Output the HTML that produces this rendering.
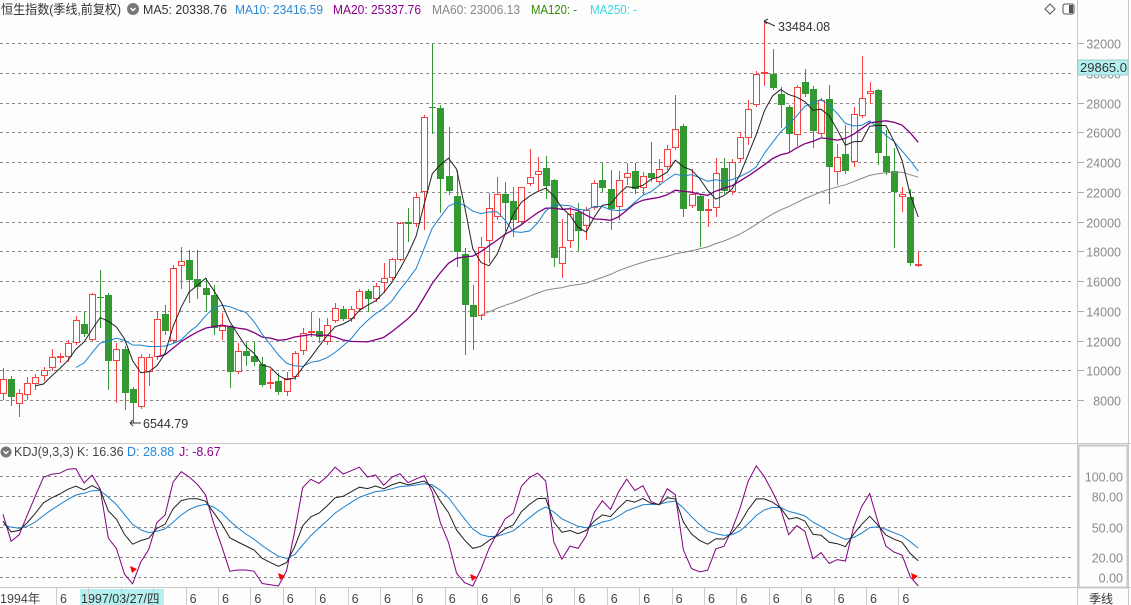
<!DOCTYPE html>
<html><head><meta charset="utf-8"><style>
body{margin:0;background:#fdfdfd;width:1131px;height:605px;overflow:hidden;font-family:"Liberation Sans","Noto Sans CJK SC",sans-serif}
svg{position:absolute;left:0;top:0}
</style></head><body>
<svg id="s" width="1131" height="605" xmlns="http://www.w3.org/2000/svg" font-family="Liberation Sans, Noto Sans CJK SC, sans-serif">
<rect width="1131" height="605" fill="#fdfdfd"/>
<g id="grid"></g>
<g id="candles"></g>
<g id="lines" fill="none"></g>
<text x="1" y="14" font-size="13" fill="#333" textLength="120" lengthAdjust="spacingAndGlyphs">恒生指数(季线,前复权)</text>
<circle cx="133" cy="9" r="6" fill="#777"/><path d="M130.5 8l2.5 2.5 2.5-2.5" stroke="#fff" stroke-width="1.4" fill="none"/>
<path d="M1050 4l5 5-5 5-5-5z" stroke="#555" fill="none"/>
<rect x="1063" y="4" width="11" height="10" rx="2" stroke="#555" fill="none"/><rect x="1069" y="5" width="4" height="8" fill="#555"/>
<line x1="1077.5" y1="0" x2="1077.5" y2="605" stroke="#c8c8c8"/>
<line x1="1128.5" y1="0" x2="1128.5" y2="605" stroke="#c8c8c8"/>
<line x1="0" y1="443.5" x2="1131" y2="443.5" stroke="#c8c8c8"/>
<line x1="0" y1="587.5" x2="1131" y2="587.5" stroke="#c8c8c8"/>
<rect x="1078.5" y="445.5" width="49" height="142" fill="none" stroke="#c8c8c8" stroke-width="2"/>
<rect x="1078" y="60" width="50" height="15" fill="#b3f0ef" stroke="#9cc"/>
<text x="1080" y="72" font-size="13" fill="#333">29865.0</text>
<circle cx="6" cy="452" r="5.5" fill="#777"/><path d="M3.5 451l2.5 2.5 2.5-2.5" stroke="#fff" stroke-width="1.4" fill="none"/>
<text y="456" font-size="12.5"><tspan x="14" fill="#444">KDJ(9,3,3)</tspan><tspan x="77" fill="#444">K: 16.36</tspan><tspan x="127" fill="#2288dd">D: 28.88</tspan><tspan x="179" fill="#8b008b">J: -8.67</tspan></text>
<text x="778" y="31" font-size="12.5" fill="#333">33484.08</text>
<path d="M764 21l11 5M764 21l4 -2M764 21l3 3" stroke="#333" fill="none"/>
<text x="143" y="428" font-size="12.5" fill="#333">6544.79</text>
<path d="M130 423h11M130 423l3 -3M130 423l3 3" stroke="#333" fill="none"/>
<rect x="80" y="589" width="84" height="16" fill="#b3f0ef"/>
<g id="axis"></g>
<text x="1089" y="603" font-size="12" fill="#333">季线</text>
</svg>
<script>
var NS="http://www.w3.org/2000/svg";
function el(p,t,a,txt){var e=document.createElementNS(NS,t);for(var k in a)e.setAttribute(k,a[k]);if(txt!=null)e.textContent=txt;document.getElementById(p).appendChild(e);return e;}
var hdr=[["MA5: 20338.76","#333",143,84],["MA10: 23416.59","#2a88d8",235,88],["MA20: 25337.76","#8b008b",333,88],["MA60: 23006.13","#888",432,88],["MA120: -","#2e8b00",531,46],["MA250: -","#3dd6e0",590,47]];
hdr.forEach(function(h){el('grid','text',{x:h[2],y:14,'font-size':13,fill:h[1],textLength:h[3],lengthAdjust:'spacingAndGlyphs'},h[0]);});
for(var p=8000;p<=32000;p+=2000){var y=Math.round(43+(32000-p)*0.01488)+0.5;
 el('grid','line',{x1:0,y1:y,x2:1072,y2:y,stroke:'#888','stroke-dasharray':'3 3'});
 el('grid','line',{x1:1078,y1:y,x2:1084,y2:y,stroke:'#aaa'});
 el('grid','text',{x:1121,y:y+5,'font-size':12.5,fill:'#8a8a8a','text-anchor':'end'},p);}
[100,80,50,20,0].forEach(function(v){var y=Math.round(577-v*1.01)+0.5;
 el('grid','line',{x1:0,y1:y,x2:1072,y2:y,stroke:'#888','stroke-dasharray':'3 3'});
 el('grid','text',{x:1123,y:y+5,'font-size':12.5,fill:'#8a8a8a','text-anchor':'end'},v.toFixed(2));});
var D=[[379,394,368,400,1],[379,397,376,406,0],[393,404,389,417,1],[383,395,377,400,1],[377,384,374,390,1],[370,376,367,381,1],[357,368,349,371,1],[356,358,353,363,1],[343,357,340,362,1],[320,343,316,345,1],
[324,334,312,337,0],[294,340,293,341,1],[297,297,270,328,0],[295,361,293,390,0],[349,361,343,403,1],[349,393,346,410,0],[389,403,387,423,0],[357,407,354,409,1],[357,372,354,386,1],[319,357,311,360,1],
[314,331,305,335,0],[268,341,265,344,1],[261,266,247,289,1],[260,280,250,303,0],[279,287,250,299,0],[288,295,278,312,0],[295,328,285,335,0],[326,331,313,340,1],[326,372,325,388,0],[351,372,343,374,1],
[351,356,342,366,0],[356,362,342,366,0],[364,385,357,387,0],[382,383,369,389,1],[381,392,373,395,0],[378,392,372,396,1],[353,377,351,380,1],[333,351,328,355,1],[331,332,312,337,1],[331,337,318,343,0],
[325,342,318,345,1],[308,321,303,323,1],[309,319,306,321,0],[309,319,306,322,1],[291,309,289,312,1],[291,299,289,312,0],[286,299,283,302,1],[278,283,263,293,1],[259,278,258,280,1],[223,260,222,261,1],
[222,224,208,242,0],[197,224,193,227,1],[117,192,115,230,1],[107,107,44,134,0],[108,179,105,213,0],[176,191,127,195,0],[196,252,170,267,0],[254,305,248,355,0],[305,317,285,350,0],[247,316,237,320,1],
[208,241,193,263,1],[194,217,177,220,1],[194,203,182,231,0],[201,220,187,237,0],[187,222,187,225,1],[177,184,149,186,1],[171,175,157,191,1],[168,186,156,199,0],[180,258,179,267,0],[247,264,219,278,1],
[214,241,207,248,1],[212,231,203,251,0],[210,226,207,240,1],[183,208,180,210,1],[180,188,163,192,0],[189,209,170,230,0],[180,207,171,220,1],[173,178,163,185,1],[171,189,163,194,0],[176,188,172,195,1],
[173,178,142,182,0],[169,182,159,185,1],[149,167,145,170,1],[129,148,95,150,1],[126,209,124,217,0],[194,206,169,208,1],[196,211,194,247,0],[209,211,199,227,1],[173,208,158,217,1],[168,191,158,194,0],
[162,192,159,195,1],[137,159,132,162,1],[109,138,100,145,1],[74,105,71,107,1],[72,74,21,86,1],[74,88,49,90,0],[94,105,87,128,0],[107,134,105,152,0],[87,135,85,146,1],[82,94,69,97,0],
[89,131,86,148,0],[100,134,98,137,1],[99,167,85,204,0],[157,172,144,185,1],[154,171,125,174,0],[114,162,107,167,1],[98,116,56,118,1],[91,94,82,104,1],[90,153,89,165,0],[156,172,130,175,0],
[171,192,148,248,0],[194,197,187,212,1],[197,263,189,266,0],[264,266,252,267,1]];
var RED='#f44040',GRN='#339933';
function X(i){return 3+8.1*i;}
D.forEach(function(d,i){var x=Math.round(X(i));var c=d[4]?RED:GRN;
 el('candles','line',{x1:x+0.5,y1:d[2],x2:x+0.5,y2:d[3],stroke:c});
 var h=Math.max(1,d[1]-d[0]);
 if(d[4]) el('candles','rect',{x:x-2.5,y:d[0]+0.5,width:6,height:Math.max(1,h-1),fill:'#fdfdfd',stroke:c});
 else el('candles','rect',{x:x-3,y:d[0],width:7,height:h,fill:c});});
var C=D.map(function(d){return d[4]?d[0]:d[1];});
function ma(n,col,w){var pts=[];for(var i=n-1;i<C.length;i++){var s=0;for(var j=i-n+1;j<=i;j++)s+=C[j];pts.push(X(i).toFixed(1)+','+(s/n).toFixed(1));}
 el('lines','polyline',{points:pts.join(' '),stroke:col,'stroke-width':w||1});}
ma(60,'#888');ma(20,'#800080',1.3);ma(10,'#1a80d0');ma(5,'#222');
function P(y){return 32000-(y-43)/0.01488;}
var K=50,Dd=50,kp=[],dp=[],jp=[];
for(var i=0;i<D.length;i++){var hh=-1e9,ll=1e9;for(var j=Math.max(0,i-8);j<=i;j++){hh=Math.max(hh,P(D[j][2]));ll=Math.min(ll,P(D[j][3]));}
 var rsv=hh==ll?50:(P(C[i])-ll)/(hh-ll)*100;K=(2*K+rsv)/3;Dd=(2*Dd+K)/3;var J=3*K-2*Dd;
 var x=X(i).toFixed(1);function yy(v){return Math.min(586,577-v*1.01).toFixed(1);}
 kp.push(x+','+yy(K));dp.push(x+','+yy(Dd));jp.push(x+','+yy(J));}
el('lines','polyline',{points:jp.join(' '),stroke:'#800080'});
el('lines','polyline',{points:dp.join(' '),stroke:'#1a80d0'});
el('lines','polyline',{points:kp.join(' '),stroke:'#222'});
[[130,570],[278,577],[470,578],[911,577]].forEach(function(t){el('lines','path',{d:'M'+t[0]+' '+(t[1]-4)+'l7 3-5 4z',fill:'#f00',stroke:'none'});});
el('axis','text',{x:0,y:603,'font-size':12.5,fill:'#444'},'1994年');
el('axis','text',{x:81,y:603,'font-size':12.5,fill:'#333'},'1997/03/27/四');
for(var k=0;k<28;k++){var x=56+32.4*k;if(x>910)break;el('axis','line',{x1:Math.round(x)+0.5,y1:588,x2:Math.round(x)+0.5,y2:605,stroke:'#ccc'});
 if(x<75||x>170)el('axis','text',{x:x+4,y:603,'font-size':12.5,fill:'#444'},'6');}
</script>
</body></html>
